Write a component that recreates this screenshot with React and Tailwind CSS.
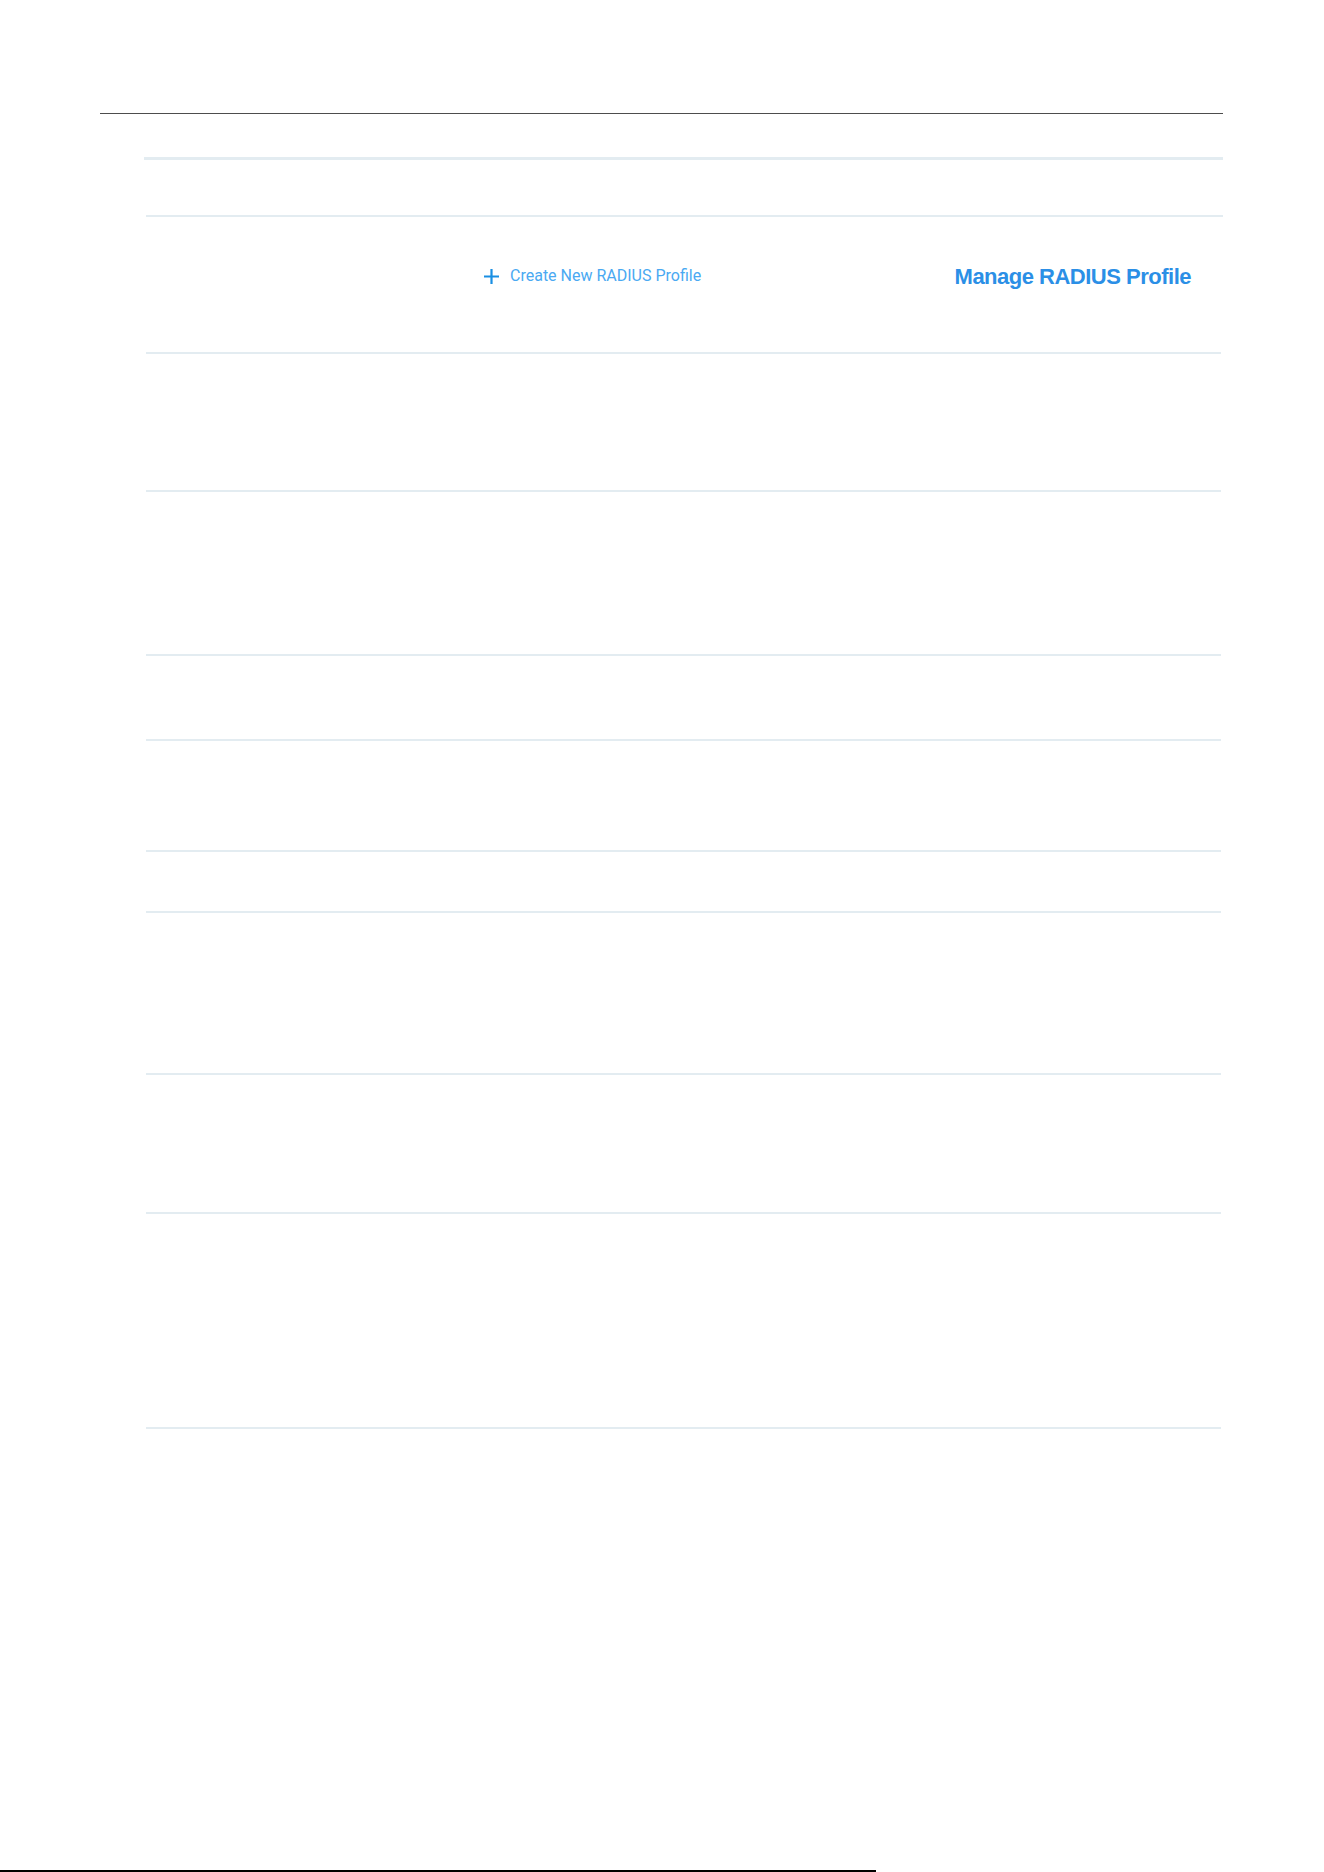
import React from 'react';

const rowHeights = [55, 135, 136, 162, 83, 109, 59, 160, 137, 213];

const PlusIcon = () => (
  <svg width="17" height="17" viewBox="0 0 17 17" className="shrink-0">
    <path d="M8.5 1v15M1 8.5h15" stroke="#1a8fe3" strokeWidth="2.2" fill="none" />
  </svg>
);

const ProfileRow = () => (
  <div className="flex items-center h-[28px] pl-[337px] pr-[30px]">
    <button className="flex items-center gap-[10px] text-[16px] text-[#4aa9f2] font-['Roboto',sans-serif]">
      <PlusIcon />
      <span>Create New RADIUS Profile</span>
    </button>
    <button className="ml-auto text-[22px] tracking-[-0.5px] font-bold text-[#2b8fe6] font-['Liberation_Sans',Arial,sans-serif]">
      Manage RADIUS Profile
    </button>
  </div>
);

export default function App() {
  return (
    <div className="h-[1872px] w-full bg-white flex flex-col overflow-hidden font-['Liberation_Sans',Arial,sans-serif]">
      <div className="h-[113px] shrink-0" />
      <div className="ml-[100px] w-[1123px] h-px bg-[#4d4d4d]" />

      {/* form table */}
      <div className="ml-[144px] w-[1079px] mt-[43px] border-t-[3px] border-[#e3ecf1]">
        {rowHeights.map((h, i) => (
          <div
            key={i}
            className={`ml-[2px] border-b-2 border-[#e3ecf1] ${i === 0 ? 'w-[1077px]' : 'w-[1075px]'} ${i === 1 ? 'pt-[45px]' : ''}`}
            style={{ height: h + 2 }}
          >
            {i === 1 && <ProfileRow />}
          </div>
        ))}
      </div>

      <div className="mt-auto w-[876px] h-[2px] bg-black" />
    </div>
  );
}
